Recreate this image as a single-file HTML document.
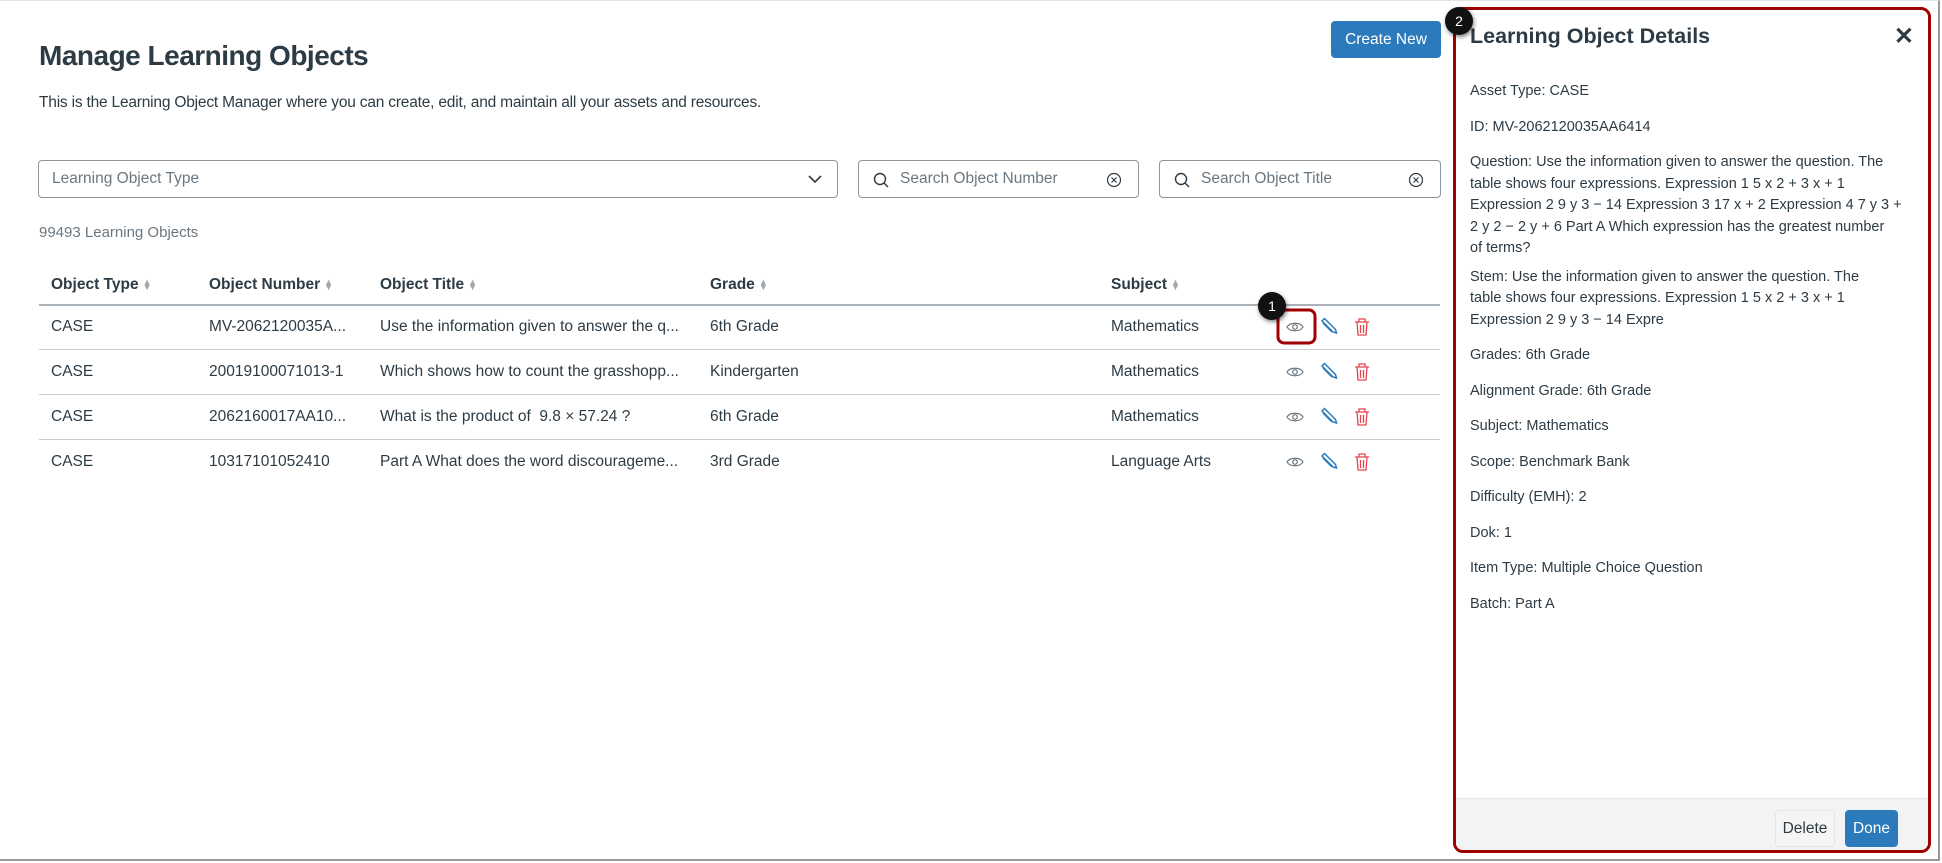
<!DOCTYPE html>
<html><head><meta charset="utf-8"><style>
*{box-sizing:border-box;margin:0;padding:0}
body{width:1942px;height:863px;background:#fff;font-family:"Liberation Sans",sans-serif;color:#2d3b45;position:relative;overflow:hidden}
.a{position:absolute}
.frame{left:0;top:0;width:1940px;height:861px;border-top:1px solid #e4e4e4;border-right:2px solid #9a9a9a;border-bottom:2px solid #9a9a9a}
h1{position:absolute;left:39px;top:40px;font-size:28px;font-weight:bold;letter-spacing:-0.5px;color:#2d3b45}
.desc{left:39px;top:94px;font-size:15.5px;letter-spacing:-0.2px}
.inp{border:1px solid #8b969e;border-radius:4px;height:38px;top:160px;font-size:15.5px;color:#6b7780;line-height:36px}
.cnt{left:39px;top:224px;font-size:15px;color:#6b7780}
.th{top:276px;font-size:15.5px;font-weight:bold}
.td{font-size:15.5px}
.line{left:39px;width:1401px;height:1px;background:#c7cdd1}
.sort{display:inline-block;font-size:9px;color:#a0a8ad;vertical-align:middle;margin-left:4px;line-height:5px}
.btn{background:#2b7abc;color:#fff;border-radius:4px;font-size:15.5px;text-align:center}
.panel{left:1453px;top:7px;width:478px;height:846px;border:3px solid #a00000;border-radius:10px;overflow:hidden;background:#fff}
.pt{left:14px;top:14px;font-size:21.5px;font-weight:bold;color:#2d3b45}
.pbody{left:14px;top:71px;font-size:14.5px;line-height:21.5px;color:#2d3b45;width:455px}
.pbody p{margin-bottom:14px}
.foot{left:0;bottom:0;width:100%;height:52px;background:#f2f3f4;border-top:1px solid #e6e8ea}
.badge{width:28px;height:28px;border-radius:50%;background:#111;color:#fff;font-size:14px;text-align:center;line-height:28px;box-shadow:1px 2px 4px rgba(0,0,0,.5)}
</style></head><body>
<div class="a frame"></div>
<h1>Manage Learning Objects</h1>
<div class="a desc">This is the Learning Object Manager where you can create, edit, and maintain all your assets and resources.</div>
<div class="a btn" style="left:1331px;top:21px;width:110px;height:37px;line-height:37px">Create New</div>

<div class="a inp" style="left:38px;width:800px;padding-left:13px">Learning Object Type
<svg class="a" style="right:14px;top:12px" width="16" height="12" viewBox="0 0 16 12"><path d="M2 3l6 6 6-6" fill="none" stroke="#2d3b45" stroke-width="1.6"/></svg></div>
<div class="a inp" style="left:858px;width:281px;padding-left:41px">Search Object Number
<svg class="a" style="left:13px;top:10px" width="18" height="18" viewBox="0 0 18 18"><circle cx="8" cy="8" r="5.5" fill="none" stroke="#2d3b45" stroke-width="1.4"/><path d="M12 12l4 4" stroke="#2d3b45" stroke-width="1.4"/></svg>
<svg class="a" style="right:16px;top:11px" width="16" height="16" viewBox="0 0 16 16"><circle cx="8" cy="8" r="6.5" fill="none" stroke="#2d3b45" stroke-width="1.2"/><path d="M5.5 5.5l5 5M10.5 5.5l-5 5" stroke="#2d3b45" stroke-width="1.2"/></svg></div>
<div class="a inp" style="left:1159px;width:282px;padding-left:41px">Search Object Title
<svg class="a" style="left:13px;top:10px" width="18" height="18" viewBox="0 0 18 18"><circle cx="8" cy="8" r="5.5" fill="none" stroke="#2d3b45" stroke-width="1.4"/><path d="M12 12l4 4" stroke="#2d3b45" stroke-width="1.4"/></svg>
<svg class="a" style="right:16px;top:11px" width="16" height="16" viewBox="0 0 16 16"><circle cx="8" cy="8" r="6.5" fill="none" stroke="#2d3b45" stroke-width="1.2"/><path d="M5.5 5.5l5 5M10.5 5.5l-5 5" stroke="#2d3b45" stroke-width="1.2"/></svg></div>

<div class="a cnt">99493 Learning Objects</div>

<div class="a th" style="left:51px">Object Type<span class="sort">▲<br>▼</span></div>
<div class="a th" style="left:209px">Object Number<span class="sort">▲<br>▼</span></div>
<div class="a th" style="left:380px">Object Title<span class="sort">▲<br>▼</span></div>
<div class="a th" style="left:710px">Grade<span class="sort">▲<br>▼</span></div>
<div class="a th" style="left:1111px">Subject<span class="sort">▲<br>▼</span></div>
<div class="a line" style="top:304px;height:1.5px;background:#aab3b9"></div>
<div class="a line" style="top:349px"></div>
<div class="a line" style="top:394px"></div>
<div class="a line" style="top:439px"></div>

<div class="a td" style="left:51px;top:318px">CASE</div><div class="a td" style="left:209px;top:318px">MV-2062120035A...</div><div class="a td" style="left:380px;top:318px">Use the information given to answer the q...</div><div class="a td" style="left:710px;top:318px">6th Grade</div><div class="a td" style="left:1111px;top:318px">Mathematics</div>
<div class="a td" style="left:51px;top:363px">CASE</div><div class="a td" style="left:209px;top:363px">20019100071013-1</div><div class="a td" style="left:380px;top:363px">Which shows how to count the grasshopp...</div><div class="a td" style="left:710px;top:363px">Kindergarten</div><div class="a td" style="left:1111px;top:363px">Mathematics</div>
<div class="a td" style="left:51px;top:408px">CASE</div><div class="a td" style="left:209px;top:408px">2062160017AA10...</div><div class="a td" style="left:380px;top:408px">What is the product of&nbsp; 9.8 × 57.24 ?</div><div class="a td" style="left:710px;top:408px">6th Grade</div><div class="a td" style="left:1111px;top:408px">Mathematics</div>
<div class="a td" style="left:51px;top:453px">CASE</div><div class="a td" style="left:209px;top:453px">10317101052410</div><div class="a td" style="left:380px;top:453px">Part A What does the word discourageme...</div><div class="a td" style="left:710px;top:453px">3rd Grade</div><div class="a td" style="left:1111px;top:453px">Language Arts</div>

<svg class="a" style="left:0;top:0" width="1450" height="500">
<defs>
<g id="ic">
<path d="M-8 0C-5-5 5-5 8 0C5 5-5 5-8 0Z" fill="none" stroke="#6b7780" stroke-width="1.2"/><circle cx="0" cy="0" r="2.3" fill="none" stroke="#6b7780" stroke-width="1.2"/>
<g transform="translate(34,0)" fill="none" stroke="#2b7abc" stroke-width="1.5"><path d="M-7-6l2.5-2.5 11 11 1 3.5-3.5-1z"/><path d="M-6-4l9 9"/></g>
<g transform="translate(67,0)" fill="none" stroke="#e5434f" stroke-width="1.3"><path d="M-7-5h14M-3-5v-3h6v3M-5-5l1 13h8l1-13M-1.5-2v8M1.5-2v8"/></g>
</g>
</defs>
<use href="#ic" x="1295" y="327"/>
<use href="#ic" x="1295" y="372"/>
<use href="#ic" x="1295" y="417"/>
<use href="#ic" x="1295" y="462"/>
<rect x="1278" y="310" width="37" height="33" rx="6" fill="none" stroke="#a00000" stroke-width="3"/>
</svg>
<div class="a badge" style="left:1258px;top:292px">1</div>

<div class="a panel">
<div class="a pt">Learning Object Details</div>
<div class="a" style="right:14px;top:12px;font-size:24px;font-weight:bold">✕</div>
<div class="a pbody">
<p>Asset Type: CASE</p>
<p>ID: MV-2062120035AA6414</p>
<p style="margin-bottom:7px">Question: Use the information given to answer the question. The<br>table shows four expressions. Expression 1 5 x 2 + 3 x + 1<br>Expression 2 9 y 3 − 14 Expression 3 17 x + 2 Expression 4 7 y 3 +<br>2 y 2 − 2 y + 6 Part A Which expression has the greatest number<br>of terms?</p>
<p>Stem: Use the information given to answer the question. The<br>table shows four expressions. Expression 1 5 x 2 + 3 x + 1<br>Expression 2 9 y 3 − 14 Expre</p>
<p>Grades: 6th Grade</p>
<p>Alignment Grade: 6th Grade</p>
<p>Subject: Mathematics</p>
<p>Scope: Benchmark Bank</p>
<p>Difficulty (EMH): 2</p>
<p>Dok: 1</p>
<p>Item Type: Multiple Choice Question</p>
<p>Batch: Part A</p>
</div>
<div class="a foot">
<div class="a" style="left:319px;top:11px;width:60px;height:37px;border:1px solid #e3e5e7;border-radius:4px;background:#f5f5f5;font-size:15.5px;line-height:35px;text-align:center">Delete</div>
<div class="a btn" style="left:389px;top:11px;width:53px;height:37px;line-height:37px">Done</div>
</div>
</div>
<div class="a badge" style="left:1445px;top:7px">2</div>
</body></html>
